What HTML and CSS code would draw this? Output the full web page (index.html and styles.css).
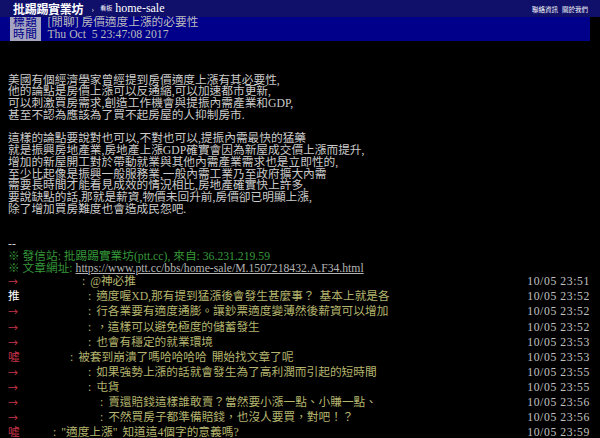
FILE: index.html
```html
<!DOCTYPE html>
<html lang="zh-Hant">

<head>
    <meta charset="UTF-8">
    <meta name="viewport" content="width=device-width, initial-scale=1.0">
    <title>[閒聊] 房價適度上漲的必要性 - home-sale</title>
    <link rel="stylesheet" href="styles.css">
</head>

<body>

    <div class="topbar">
        <div class="brand">
            <a class="site" href="#">批踢踢實業坊</a>
            <span class="sep">›</span>
            <a class="board" href="#"><span class="board-label">看板</span> home-sale</a>
        </div>
        <div class="links">
            <a href="#">聯絡資訊</a>
            <a href="#">關於我們</a>
        </div>
    </div>

    <div class="main">
        <!-- 標題 / 時間：左邊灰色標籤一欄，右邊藍底內容一欄 -->
        <div class="meta">
            <div class="meta-tags">
                <div>標題</div>
                <div>時間</div>
            </div>
            <div class="meta-values">
                <div>[閒聊] 房價適度上漲的必要性</div>
                <div>Thu Oct  5 23:47:08 2017</div>
            </div>
        </div>

        <div class="content">美國有個經濟學家曾經提到房價適度上漲有其必要性,
他的論點是房價上漲可以反通縮,可以加速都市更新,
可以刺激買房需求,創造工作機會與提振內需產業和GDP,
甚至不認為應該為了買不起房屋的人抑制房市.

這樣的論點要說對也可以,不對也可以,提振內需最快的猛藥
就是振興房地產業,房地產上漲GDP確實會因為新屋成交價上漲而提升,
增加的新屋開工對於帶動就業與其他內需產業需求也是立即性的,
至少比起像是振興一般服務業,一般內需工業乃至政府擴大內需
需要長時間才能看見成效的情況相比,房地產確實快上許多,
要說缺點的話,那就是薪資,物價未回升前,房價卻已明顯上漲,
除了增加買房難度也會造成民怨吧.


--
<span class="green">※ 發信站: 批踢踢實業坊(ptt.cc), 來自: 36.231.219.59</span>
<span class="green">※ 文章網址: </span><a class="url" href="#">https://www.ptt.cc/bbs/home-sale/M.1507218432.A.F34.html</a></div>

        <!-- 推文：帳號被塗掉，只留下空白的寬度 -->
        <div class="push">
            <span class="push-tag arrow">→</span>
            <span class="uid w50"></span>
            <span class="push-content">: @神必推</span>
            <span class="push-time">10/05 23:51</span>
        </div>
        <div class="push">
            <span class="push-tag good">推</span>
            <span class="uid w56"></span>
            <span class="push-content">: 適度喔XD,那有提到猛漲後會發生甚麼事？ 基本上就是各</span>
            <span class="push-time">10/05 23:52</span>
        </div>
        <div class="push">
            <span class="push-tag arrow">→</span>
            <span class="uid w56"></span>
            <span class="push-content">: 行各業要有適度通膨。讓鈔票適度變薄然後薪資可以增加</span>
            <span class="push-time">10/05 23:52</span>
        </div>
        <div class="push">
            <span class="push-tag arrow">→</span>
            <span class="uid w56"></span>
            <span class="push-content">: ，這樣可以避免極度的儲蓄發生</span>
            <span class="push-time">10/05 23:52</span>
        </div>
        <div class="push">
            <span class="push-tag arrow">→</span>
            <span class="uid w56"></span>
            <span class="push-content">: 也會有穩定的就業環境</span>
            <span class="push-time">10/05 23:53</span>
        </div>
        <div class="push">
            <span class="push-tag boo">噓</span>
            <span class="uid w38"></span>
            <span class="push-content">: 被套到崩潰了嗎哈哈哈哈 開始找文章了呢</span>
            <span class="push-time">10/05 23:53</span>
        </div>
        <div class="push">
            <span class="push-tag arrow">→</span>
            <span class="uid w56"></span>
            <span class="push-content">: 如果強勢上漲的話就會發生為了高利潤而引起的短時間</span>
            <span class="push-time">10/05 23:55</span>
        </div>
        <div class="push">
            <span class="push-tag arrow">→</span>
            <span class="uid w56"></span>
            <span class="push-content">: 屯貨</span>
            <span class="push-time">10/05 23:55</span>
        </div>
        <div class="push">
            <span class="push-tag arrow">→</span>
            <span class="uid w68"></span>
            <span class="push-content">: 賣還賠錢這樣誰敢賣？當然要小漲一點、小賺一點、</span>
            <span class="push-time">10/05 23:56</span>
        </div>
        <div class="push">
            <span class="push-tag arrow">→</span>
            <span class="uid w68"></span>
            <span class="push-content">: 不然買房子都準備賠錢，也沒人要買，對吧！？</span>
            <span class="push-time">10/05 23:56</span>
        </div>
        <div class="push">
            <span class="push-tag boo">噓</span>
            <span class="uid w21"></span>
            <span class="push-content">: "適度上漲" 知道這4個字的意義嗎?</span>
            <span class="push-time">10/05 23:59</span>
        </div>
    </div>
</body>

</html>
```

FILE: styles.css
```css
* {
    padding: 0;
    margin: 0;
    box-sizing: border-box;
}

body {
    background-color: #000;
    color: #cacaca;
    font-family: "Liberation Serif", "Noto Sans CJK TC", serif;
    font-size: 11.7px;
    overflow: hidden;
}

a {
    color: inherit;
    text-decoration: none;
}

/* 上方深藍色的板名列 */
.topbar {
    height: 17px;
    background-color: #10106a;
    display: flex;
    justify-content: space-between;
    align-items: center;
    padding: 0 12px 0 13px;
    color: #fff;
}

.brand {
    display: flex;
    align-items: center;
}

.site {
    font-weight: bold;
    font-size: 12px;
    letter-spacing: -0.3px;
}

.sep {
    font-size: 9px;
    margin: 0 6px 0 8px;
    color: #ccc;
}

.board {
    font-size: 12px;
}

.board-label {
    font-size: 6px;
    vertical-align: 2px;
}

.links {
    display: flex;
    gap: 4px;
    font-size: 6.5px;
}

.main {
    padding: 0 10px 0 8px;
}

/* 標題 / 時間 */
.meta {
    display: flex;
    background-color: #00008a;
    margin-left: -8px;
    padding-left: 10px;
    line-height: 11.75px;
}

.meta-tags {
    background-color: #a4a4c0;
    color: #00008a;
    padding: 0 4px 0 3px;
    letter-spacing: 0.5px;
}

.meta-values {
    color: #bbb;
    padding-left: 6px;
}

/* 時間中間有兩個空白，要保留 */
.meta-values div {
    white-space: pre;
}

.content {
    margin-top: 34px;
    line-height: 11.75px;
    white-space: pre;
}

.green {
    color: #35983a;
}

.url {
    color: #b4b4b4;
    text-decoration: underline;
}

/* 推文 */
.push {
    display: flex;
    height: 15.1px;
    line-height: 15.1px;
}

.push-tag {
    width: 24px;
}

.push-tag.good {
    color: #fff;
}

.push-tag.arrow {
    font-family: "Noto Sans CJK TC", sans-serif;
    font-size: 10px;
}

.push-tag.arrow,
.push-tag.boo {
    color: #c8344a;
}

.uid.w21 { width: 21px; }
.uid.w38 { width: 38px; }
.uid.w50 { width: 50px; }
.uid.w56 { width: 56px; }
.uid.w68 { width: 68px; }

.push-content {
    flex: 1;
    color: #b4b46e;
    word-spacing: 2px;
    white-space: pre;
}

.push-time {
    color: #c0c0c0;
    letter-spacing: 0.6px;
}
```
